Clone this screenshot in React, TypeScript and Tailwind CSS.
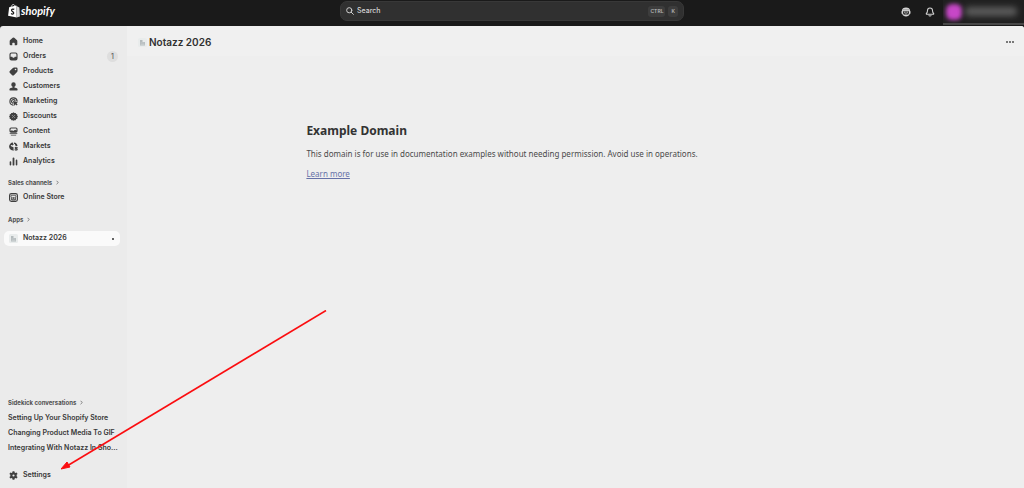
import React from "react";

type IconProps = { children: React.ReactNode };

function Glyph({ children }: IconProps) {
  return (
    <svg viewBox="0 0 20 20" className="size-[9px] shrink-0 fill-[#404040]" aria-hidden="true">
      {children}
    </svg>
  );
}

const line = { fill: "none", stroke: "#404040", strokeWidth: 2.6, strokeLinecap: "round", strokeLinejoin: "round" } as const;

const icons = {
  home: <path d="M8.300 1.700a2.600 2.600 0 0 1 3.400 0l5.600 5.200A3.600 3.600 0 0 1 18.500 9.500V16a2.500 2.500 0 0 1-2.500 2.500h-2.300a1 1 0 0 1-1-1V14a1.500 1.500 0 0 0-1.500-1.500H8.800A1.500 1.500 0 0 0 7.300 14v3.500a1 1 0 0 1-1 1H4A2.500 2.500 0 0 1 1.500 16V9.500a3.600 3.600 0 0 1 1.200-2.600Z" />,
  orders: <path fillRule="evenodd" d="M5.500 1h9A4.500 4.500 0 0 1 19 5.500v9a4.500 4.500 0 0 1-4.500 4.500h-9A4.500 4.500 0 0 1 1 14.500v-9A4.500 4.500 0 0 1 5.500 1Zm.500 2.500A2.500 2.500 0 0 0 3.500 6v4.500h2.800c.6 0 1 .3 1.300.8l.5.900c.3.500.7.800 1.300.800h1.200c.6 0 1-.3 1.300-.8l.5-.9c.3-.5.7-.8 1.300-.8h2.800V6A2.500 2.500 0 0 0 14 3.500Z" />,
  products: <path fillRule="evenodd" d="M11.500 1.200h4.800a2.700 2.700 0 0 1 2.700 2.700v4.700c0 1-.4 2-1.100 2.700l-6.400 6.500a3.500 3.500 0 0 1-5 0l-4.300-4.400a3.500 3.500 0 0 1 0-4.900l6.500-6.400a4 4 0 0 1 2.800-.9ZM14.500 7.300a1.800 1.800 0 1 0 0-3.600 1.800 1.800 0 0 0 0 3.600Z" />,
  customers: (
    <>
      <path d="M10 .8a4.900 4.900 0 0 1 4.900 4.900c0 3-2 5.600-4.900 5.600S5.100 8.700 5.100 5.700A4.900 4.900 0 0 1 10 .8Z" />
      <path d="M8 10h4v2l5.500 1.700c1 .4 1.500 1.300 1.500 2.300v2c0 .6-.4 1-1 1H2c-.6 0-1-.4-1-1v-2c0-1 .5-1.900 1.500-2.300L8 12Z" />
    </>
  ),
  marketing: (
    <>
      <path {...line} d="M9 18a8 8 0 1 1 9-9" />
      <path {...line} d="M8.500 13.500A4 4 0 1 1 13.500 8.500" />
      <path d="M9 9.800c-.2-.7.400-1.300 1.100-1.100l8.400 2.900c.8.300.8 1.300.1 1.600l-2.100 1 2.600 2.700-2 2-2.700-2.600-1.100 2.100c-.3.700-1.400.6-1.600-.2Z" />
    </>
  ),
  discounts: (
    <>
      <path d="m10 .7 2.200 1.700 2.800-.3 1 2.600 2.600 1-.3 2.800L20 10l-1.700 2 .3 2.800-2.600 1-1 2.600-2.800-.3L10 19.500l-2.200-1.400-2.800.3-1-2.600-2.600-1 .3-2.800L0 10l1.700-1.500-.3-2.800 2.600-1 1-2.600 2.800.3Z" />
      <path d="m7 13 6-6" stroke="#ebebeb" strokeWidth="1" />
      <circle cx="7.300" cy="7.500" r="1" fill="#ebebeb" />
      <circle cx="12.700" cy="12.500" r="1" fill="#ebebeb" />
    </>
  ),
  content: (
    <>
      <path fillRule="evenodd" d="M4.500 1h11A3.500 3.500 0 0 1 19 4.500V9a3.500 3.500 0 0 1-3.500 3.500h-11A3.500 3.500 0 0 1 1 9V4.500A3.500 3.500 0 0 1 4.500 1ZM3.500 9l3-2 3 2 4-3 3 2V4.500a1 1 0 0 0-1-1h-11a1 1 0 0 0-1 1Z" />
      <path d="M1.500 14h17v1.800h-17ZM3.500 17h13a3 3 0 0 1-2.500 2H6a3 3 0 0 1-2.500-2Z" />
    </>
  ),
  markets: (
    <>
      <path d="M9 1.200A8.900 8.900 0 1 0 11 18.800l-1.300-3.300 1-2.500-3.200-2.700-2-.3-2-2.800 2.500-.8L8 8l2.600-2.600L9 3.800Z" />
      <path d="M11 1.100a9 9 0 0 1 7.900 7.600l-2.900.3-2.800-1.700.2-2.300-2.500-1Z" />
      <path {...line} d="M18 12.300c-1-.9-4.200-1-4.200.8 0 2 4.500 1.100 4.500 3.200 0 1.900-3.500 2-4.700.9" />
    </>
  ),
  analytics: <path d="M1.500 11A1.700 1.700 0 0 1 5 11v6a1.700 1.700 0 0 1-3.500 0ZM8 3a2 2 0 0 1 4 0v14a2 2 0 0 1-4 0Zm7 4.500a1.700 1.700 0 0 1 3.500 0V17a1.700 1.700 0 0 1-3.500 0Z" />,
  store: (
    <>
      <rect x="1.300" y="1.300" width="17.400" height="17.400" rx="4" fill="none" stroke="#404040" strokeWidth="2.600" />
      <path {...line} strokeWidth={1.800} d="M5.500 5h9l1 3.500a2 2 0 0 1-3.700.5 2 2 0 0 1-3.600 0 2 2 0 0 1-3.700-.5ZM5.500 11v4.500h9V11M8.500 15v-3h3v3" />
    </>
  ),
  settings: (
    <path fillRule="evenodd" d="M8 .5h4l.6 2.700 1.700 1 2.800-.9 2 3.300-2.100 1.900v3l2.100 1.900-2 3.300-2.800-.9-1.700 1-.6 2.700H8l-.6-2.700-1.700-1-2.800.9-2-3.300L3 11.500v-3L.9 6.600l2-3.300 2.800.9 1.700-1ZM10 12.400a2.400 2.400 0 1 0 0-4.800 2.400 2.400 0 0 0 0 4.800Z" />
  ),
};

function AppMark() {
  return (
    <svg viewBox="0 0 18 18" className="size-[9px] shrink-0" aria-hidden="true">
      <rect width="18" height="18" rx="3" fill="#e9ecec" />
      <path d="M4 4h5v4h5v7H4Z" fill="#b4bbbd" />
      <path d="M5 10h8M5 13h8" stroke="#d8dddd" strokeWidth="1" />
    </svg>
  );
}

function Row({ icon, label, badge }: { icon: React.ReactNode; label: string; badge?: string }) {
  return (
    <a href="#" className="flex h-[15px] items-center gap-[5px] rounded px-[5px]">
      <Glyph>{icon}</Glyph>
      <span className="grow">{label}</span>
      {badge && (
        <span className="rounded-full bg-[#dedede] px-1 text-[7px] leading-[11px] font-medium text-[#616161]">{badge}</span>
      )}
    </a>
  );
}

function SectionLabel({ children }: { children: string }) {
  return (
    <button type="button" className="flex h-[15px] items-center gap-1 px-1 text-[6px] font-bold text-[#505050]">
      {children}
      <svg viewBox="0 0 4 6" className="h-[5px] w-[3px]" fill="none" stroke="#606060" aria-hidden="true">
        <path d="m.7.700 2.300 2.300L.7 5.300" />
      </svg>
    </button>
  );
}

const mainLinks = [
  { label: "Home", icon: icons.home },
  { label: "Orders", icon: icons.orders, badge: "1" },
  { label: "Products", icon: icons.products },
  { label: "Customers", icon: icons.customers },
  { label: "Marketing", icon: icons.marketing },
  { label: "Discounts", icon: icons.discounts },
  { label: "Content", icon: icons.content },
  { label: "Markets", icon: icons.markets },
  { label: "Analytics", icon: icons.analytics },
];

const conversations = ["Setting Up Your Shopify Store", "Changing Product Media To GIF", "Integrating With Notazz In Sho..."];

function TopBar() {
  return (
    <header className="grid h-[26px] shrink-0 grid-cols-[1fr_344px_1fr] bg-[#1a1a1a] text-white">
      <a href="#" className="flex items-center gap-px self-start pt-1 pl-2" aria-label="Shopify home">
        <svg viewBox="0 0 22 26" className="h-[14px] w-3" aria-hidden="true">
          <path d="m2 6 13-3 1 22L0 22Z" fill="#fff" />
          <path d="m15 3 3 2 3 1.500L22 23l-6 2Z" fill="#d9d9d9" />
          <path d="M5.500 6.500C6 3 8 .8 10 1c2 .2 2.500 2 2.600 4" fill="none" stroke="#fff" strokeWidth="1.400" />
          <path d="M11.500 10c-2-1.200-5-.7-5 1.600 0 2.500 4 2.600 4 5.200 0 2.200-3 2.700-5 1" fill="none" stroke="#1a1a1a" strokeWidth="2.300" />
        </svg>
        <span className="font-['Lato',sans-serif] text-[11px] leading-[14px] font-bold italic">shopify</span>
      </a>
      <label className="mt-px flex h-5 items-center gap-[3px] rounded-[7px] border border-[#383838] bg-[#303030] px-[5px]">
        <svg viewBox="0 0 16 16" className="size-2 shrink-0" fill="none" stroke="#d0d0d0" strokeWidth="2" strokeLinecap="round" aria-hidden="true">
          <circle cx="6.500" cy="6.500" r="5.200" />
          <path d="m10.500 10.500 4.300 4.300" />
        </svg>
        <input type="search" aria-label="Search" placeholder="Search" className="min-w-0 grow bg-transparent pt-px text-[7px] font-medium outline-none placeholder:text-[#d5d5d5]" />
        <kbd className="rounded-[3px] bg-[#3d3d3d] px-[2px] font-['Inter',sans-serif] text-[5px] leading-[11px] font-semibold text-[#b5b5b5]">CTRL</kbd>
        <kbd className="rounded-[3px] bg-[#3d3d3d] px-[3px] font-['Inter',sans-serif] text-[5px] leading-[11px] font-semibold text-[#b5b5b5]">K</kbd>
      </label>
      <div className="flex items-start justify-end">
        <button type="button" aria-label="Sidekick" className="mt-[7px] mr-[14px]">
          <svg viewBox="0 0 20 20" className="size-[10px]" aria-hidden="true">
            <path d="M10 1c5 0 8 2.500 8 6l1 2v4l-1.500 1c-1 3-3.500 5-7.500 5s-6.500-2-7.500-5L1 13V9l1-2c0-3.500 3-6 8-6Z" fill="#d4d4d4" />
            <path d="M4 8.500h12v3c0 3-2 4.500-6 4.500s-6-1.500-6-4.500Z" fill="#303030" />
            <path d="M6 10.500h3M11 10.500h3M7.500 14h5" stroke="#e5e5e5" strokeWidth="1.400" />
            <path d="M4 5.500h12" stroke="#777" />
          </svg>
        </button>
        <button type="button" aria-label="Notifications" className="mt-[7px] mr-2">
          <svg viewBox="0 0 20 20" className="size-[10px]" fill="none" stroke="#cfcfcf" strokeWidth="2.200" strokeLinecap="round" strokeLinejoin="round" aria-hidden="true">
            <path d="M10 2a5 5 0 0 0-5 5c0 3-.7 4.500-2.200 6-.6.600-.2 1.500.7 1.500h13c.9 0 1.300-.9.700-1.500-1.500-1.500-2.200-3-2.200-6a5 5 0 0 0-5-5ZM8 17c.3 1.300 3.700 1.300 4 0" />
          </svg>
        </button>
        <button type="button" aria-label="Account" className="flex h-[25px] w-[81px] items-center gap-[3px] overflow-hidden border-b-2 border-[#484848] bg-[#202020] pl-[3px]">
          <span className="size-4 rounded-md bg-[#c747c7] blur-[2px]" />
          <span className="h-[9px] w-[52px] rounded bg-[#5c5c5c] blur-[3px]" />
        </button>
      </div>
    </header>
  );
}

function Sidebar() {
  return (
    <aside className="flex w-[127px] shrink-0 flex-col justify-between bg-[#ebebeb] px-1 pt-2 pb-[5px] text-[7px] font-semibold text-[#383838]">
      <nav aria-label="Main">
        {mainLinks.map((item) => (
          <Row key={item.label} {...item} />
        ))}
        <div className="mt-[6px]">
          <SectionLabel>Sales channels</SectionLabel>
          <Row icon={icons.store} label="Online Store" />
        </div>
        <div className="mt-[7px]">
          <SectionLabel>Apps</SectionLabel>
          <a href="#" aria-current="page" className="mt-1 mr-[3px] flex h-[15px] items-center gap-[5px] rounded-[5px] bg-[#fafafa] px-[5px]">
            <AppMark />
            <span className="grow">Notazz 2026</span>
            <span className="mr-px size-[2px] rounded-full bg-[#303030]" />
          </a>
        </div>
      </nav>
      <div>
        <SectionLabel>Sidekick conversations</SectionLabel>
        <ul className="mb-[13px] ml-1">
          {conversations.map((title) => (
            <li key={title}>
              <a href="#" className="block leading-[15px] whitespace-nowrap">{title}</a>
            </li>
          ))}
        </ul>
        <Row icon={icons.settings} label="Settings" />
      </div>
    </aside>
  );
}

export default function App() {
  return (
    <div className="relative flex min-h-screen flex-col overflow-hidden bg-[#1a1a1a] font-['Inter',sans-serif]">
      <TopBar />
      <div className="flex grow overflow-hidden rounded-t-[3px]">
        <Sidebar />
        <main className="min-w-0 grow bg-[#eeeeee]">
          <div className="flex h-[30px] items-center gap-[2px] bg-[#f0f0f0] pt-[2px] pr-[9px] pl-[11px]">
            <AppMark />
            <h1 className="grow text-[10px] leading-3 font-semibold text-[#303030]">Notazz 2026</h1>
            <button type="button" aria-label="More actions" className="flex gap-px p-px">
              <span className="size-[2px] rounded-full bg-[#505050]" />
              <span className="size-[2px] rounded-full bg-[#505050]" />
              <span className="size-[2px] rounded-full bg-[#505050]" />
            </button>
          </div>
          <article className="ml-[20%] pt-[66px] font-['Noto_Sans',sans-serif] text-[8px] leading-3 text-[#4a4a4a]">
            <h2 className="text-[12px] leading-[18px] font-bold text-[#333333]">Example Domain</h2>
            <p className="mt-2">This domain is for use in documentation examples without needing permission. Avoid use in operations.</p>
            <p className="mt-2">
              <a href="#" className="text-[#6672a8] underline">Learn more</a>
            </p>
          </article>
        </main>
      </div>
      <svg viewBox="0 0 266 160" className="pointer-events-none absolute top-[310px] left-[61px] h-[160px] w-[266px]" aria-hidden="true">
        <path d="M265 .500 6 156" stroke="#fb0d10" strokeWidth="1.600" fill="none" />
        <path d="m0 159 6-7 3 5Z" fill="#fb0d10" stroke="#fb0d10" strokeLinejoin="round" />
      </svg>
    </div>
  );
}
